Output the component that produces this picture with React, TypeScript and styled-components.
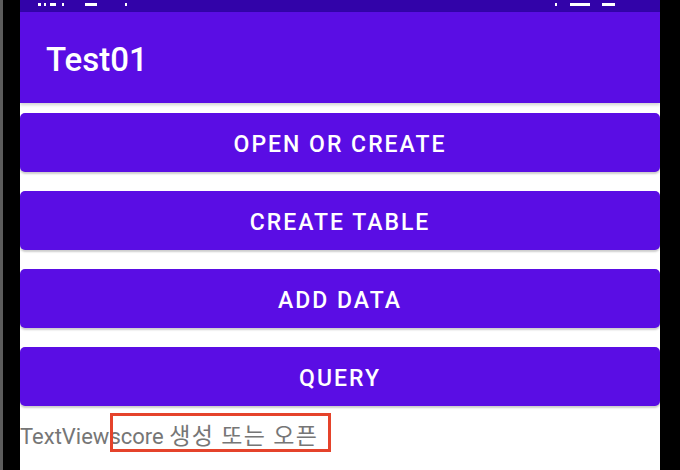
import React from "react";
import styled, { createGlobalStyle } from "styled-components";

const GlobalStyle = createGlobalStyle`
  html, body {
    margin: 0;
    padding: 0;
    background: #000;
  }
  body {
    font-family: Roboto, "Noto Sans CJK KR", sans-serif;
  }
`;

const Frame = styled.div`
  display: flex;
  width: 680px;
  height: 470px;
  overflow: hidden;
  background: #000;
`;

const Bezel = styled.div<{ edge?: boolean }>`
  width: 20px;
  flex: none;
  background: #000;
  box-sizing: border-box;
  border-left: ${(props) => (props.edge ? "3px solid #5c5c5c" : "none")};
`;

const Screen = styled.div`
  flex: 1;
  display: flex;
  flex-direction: column;
  background: #fff;
  position: relative;
`;

const StatusBar = styled.div`
  height: 12px;
  flex: none;
  background: #3203a9;
  overflow: hidden;
`;

const AppBar = styled.div`
  height: 91px;
  flex: none;
  display: flex;
  align-items: center;
  padding-left: 26px;
  background: #5a0de4;
  box-shadow: 0 2px 3px rgba(0, 0, 0, 0.18);
  position: relative;
  z-index: 1;
`;

const Title = styled.h1`
  margin: 0;
  font-family: Roboto, sans-serif;
  font-weight: 500;
  font-size: 33px;
  color: #fff;
  letter-spacing: 0;
  padding-top: 3px;
`;

const ButtonList = styled.div`
  display: flex;
  flex-direction: column;
  gap: 19px;
  padding-top: 10px;
`;

const ActionButton = styled.button`
  height: 59px;
  width: 100%;
  padding: 3px 0 0;
  border: none;
  border-radius: 5px;
  background: #5a0de4;
  color: #fff;
  font-family: Roboto, sans-serif;
  font-weight: 500;
  font-size: 23px;
  letter-spacing: 2px;
  text-transform: uppercase;
  box-shadow: 0 2px 2px rgba(0, 0, 0, 0.2);
  cursor: pointer;
`;

const TextRow = styled.div`
  position: relative;
  margin-top: 15px;
  font-family: Roboto, "Noto Sans CJK KR", sans-serif;
  font-size: 22px;
  line-height: 26px;
  color: #767676;
  white-space: nowrap;
`;

const Hangul = styled.span`
  font-family: "Noto Sans CJK KR", sans-serif;
  font-size: 23px;
  letter-spacing: 1.5px;
`;

const Highlight = styled.div`
  position: absolute;
  left: 90px;
  top: -8px;
  width: 221px;
  height: 39px;
  box-sizing: border-box;
  border: 3px solid #e5432b;
`;

const statusBits: [number, number][] = [
  [18, 3],
  [24, 2],
  [30, 6],
  [42, 2],
  [65, 12],
  [105, 2],
  [535, 2],
  [550, 20],
  [582, 13],
];

const StatusGlyphs = () => (
  <svg width="640" height="12" viewBox="0 0 640 12">
    {statusBits.map(([x, w]) => (
      <rect key={x} x={x} y={0} width={w} height={3} fill="#fff" />
    ))}
  </svg>
);

const actions = ["Open or create", "Create table", "Add data", "Query"];

export default function App() {
  return (
    <>
      <GlobalStyle />
      <Frame>
        <Bezel edge />
        <Screen>
          <StatusBar>
            <StatusGlyphs />
          </StatusBar>
          <AppBar>
            <Title>Test01</Title>
          </AppBar>
          <ButtonList>
            {actions.map((label) => (
              <ActionButton key={label}>{label}</ActionButton>
            ))}
          </ButtonList>
          <TextRow>
            TextViewscore <Hangul>생성 또는 오픈</Hangul>
            <Highlight />
          </TextRow>
        </Screen>
        <Bezel />
      </Frame>
    </>
  );
}
